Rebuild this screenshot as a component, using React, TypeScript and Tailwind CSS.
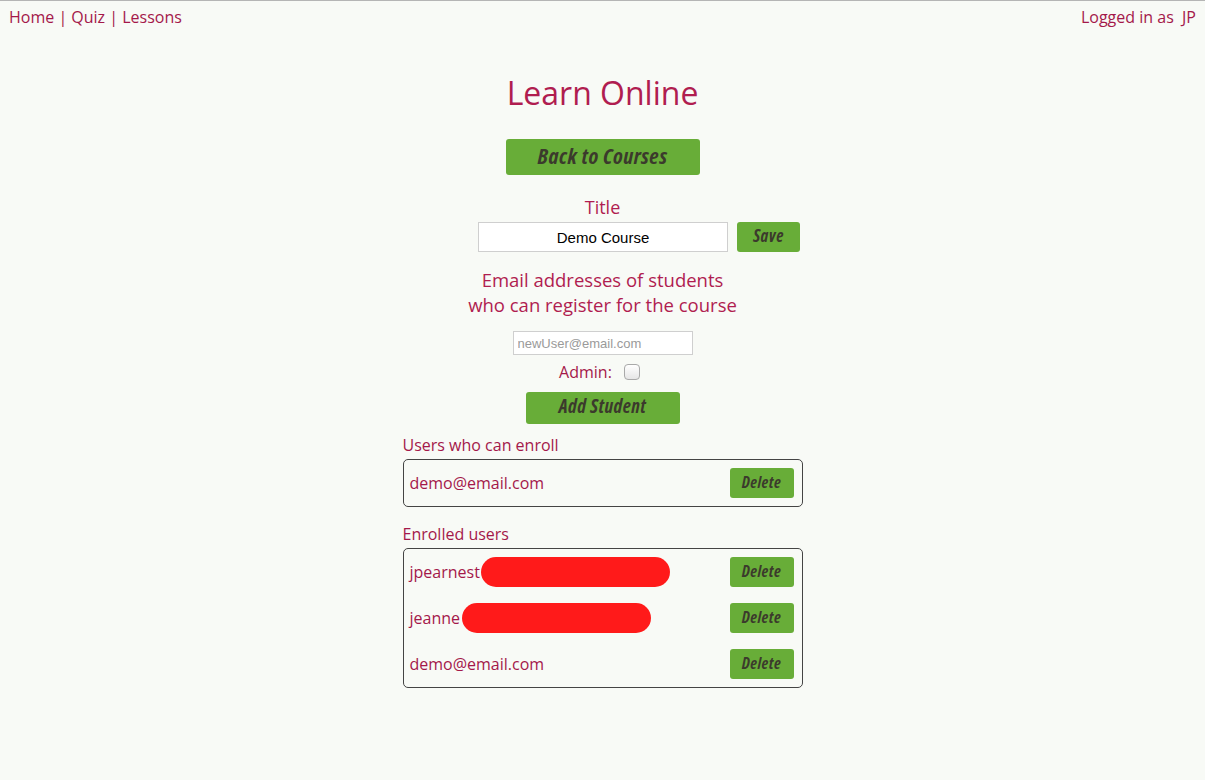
const sans = "font-['Open_Sans',sans-serif]"
const btnFont = "font-['Open_Sans',sans-serif] font-bold italic [font-stretch:75%] text-[#3b3a2c] tracking-[0.5px]"

function GreenButton({ label, className }: { label: string; className: string }) {
  return (
    <button className={`bg-[#68ad38] rounded-[3px] flex items-center justify-center pb-[3px] ${btnFont} ${className}`}>
      {label}
    </button>
  )
}

const enrolled = [
  { name: "jpearnest", pill: "left-[71px] w-[189px]" },
  { name: "jeanne", pill: "left-[52px] w-[189px]" },
  { name: "demo@email.com", pill: "" },
]

export default function App() {
  return (
    <div className={`min-h-[780px] bg-[#f8faf6] border-t border-[#b5b5b5] text-[#a4184a] ${sans}`}>
      <div className="flex justify-between px-[9px] pt-[5px] text-[16px] leading-[22px]">
        <div>Home | Quiz | Lessons</div>
        <div>Logged in as&nbsp; JP</div>
      </div>

      <div className="flex flex-col items-center">
        <h1 className="mt-[43px] text-[32px] leading-[44px] text-[#b01d50]">Learn Online</h1>

        <GreenButton label="Back to Courses" className="mt-[24px] w-[194px] h-[36px] text-[22px]" />

        <div className="mt-[20px] text-[18px] leading-[24px] text-[#b01d50]">Title</div>
        <div className="mt-[3px] flex gap-[9px] ml-[73px]">
          <input
            defaultValue="Demo Course"
            className="w-[250px] h-[30px] bg-white border border-[#cfcfcf] text-center text-[15px] text-black font-['Liberation_Sans',sans-serif] outline-none"
          />
          <GreenButton label="Save" className="w-[63px] h-[30px] text-[17px]" />
        </div>

        <div className="mt-[15px] text-center text-[18.5px] leading-[25px] text-[#b01d50]">
          Email addresses of students
          <br />
          who can register for the course
        </div>

        <input
          placeholder="newUser@email.com"
          className="mt-[14px] w-[180px] h-[24px] bg-white border border-[#cfcfcf] px-[4px] text-[13px] text-black placeholder:text-[#9a9a9a] font-['Liberation_Sans',sans-serif] outline-none"
        />

        <div className="mt-[6px] flex items-center gap-[12px] text-[16px] leading-[22px] mr-[6px]">
          <span>Admin:</span>
          <span className="w-[16px] h-[16px] rounded-[4px] border border-[#a9a9a9] bg-gradient-to-b from-white to-[#e6e6e6]" />
        </div>

        <GreenButton label="Add Student" className="mt-[9px] w-[154px] h-[32px] text-[19px]" />

        <div className="w-[400px] mt-[10px]">
          <div className="text-[16px] leading-[22px]">Users who can enroll</div>
          <div className="mt-[3px] border border-[#444] rounded-[5px] px-[6px] py-[8px]">
            <div className="flex items-center justify-between h-[30px]">
              <span className="text-[16px]">demo@email.com</span>
              <GreenButton label="Delete" className="w-[64px] h-[30px] text-[16px] mr-[2px]" />
            </div>
          </div>

          <div className="mt-[16px] text-[16px] leading-[22px]">Enrolled users</div>
          <div className="mt-[3px] border border-[#444] rounded-[5px] px-[6px] py-[8px] flex flex-col gap-[16px]">
            {enrolled.map((u, i) => (
              <div key={i} className="relative flex items-center justify-between h-[30px]">
                <span className="text-[16px]">{u.name}</span>
                {u.pill && (
                  <span className={`absolute top-0 h-[30px] rounded-full bg-[#ff1a1a] ${u.pill}`} />
                )}
                <GreenButton label="Delete" className="w-[64px] h-[30px] text-[16px] mr-[2px]" />
              </div>
            ))}
          </div>
        </div>
      </div>
    </div>
  )
}
